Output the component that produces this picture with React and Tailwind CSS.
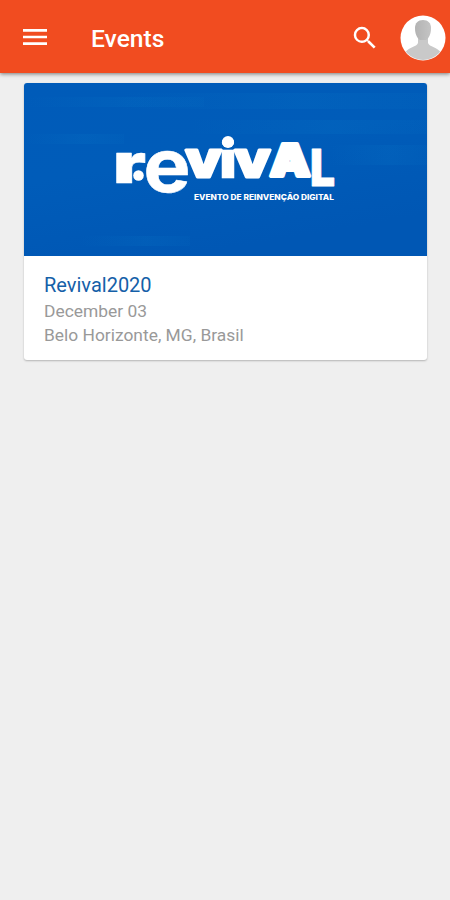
import { MdMenu, MdSearch } from "react-icons/md";

const EVENTS = [
	{
		id: 1,
		title: "Revival2020",
		date: "December 03",
		place: "Belo Horizonte, MG, Brasil",
	},
];

// Wordmark letters, each with its own size, baseline and weight
const LETTERS = [
	{ char: "r", x: 113, y: 183, size: 55, width: 33, weight: 900, stroke: 0.6 },
	{ char: "e", x: 143.5, y: 192, size: 75, width: 47, weight: 700, stroke: 0.6 },
	{ char: "v", x: 185.5, y: 177, size: 49, width: 36, weight: 800, stroke: 3 },
	{ char: "i", x: 219, y: 178, size: 52, width: 18, weight: 900, stroke: 0.4 },
	{ char: "v", x: 234.5, y: 177, size: 49, width: 36, weight: 800, stroke: 3 },
	{ char: "A", x: 270, y: 176, size: 44, width: 40, weight: 900, stroke: 4 },
	{ char: "L", x: 310, y: 186, size: 51, width: 25, weight: 900, stroke: 0.8 },
];

function Avatar() {
	return (
		<svg viewBox="0 0 46 46" className="h-[46px] w-[46px]">
			<defs>
				<clipPath id="avatar-clip">
					<circle cx="23" cy="23" r="22" />
				</clipPath>
				<linearGradient id="avatar-head">
					<stop offset="0" stopColor="#b3b3b3" />
					<stop offset="1" stopColor="#c4c4c4" />
				</linearGradient>
			</defs>
			<circle cx="23" cy="23" r="22.5" fill="#fff" />
			<g clipPath="url(#avatar-clip)">
				<path
					d="M5 46V38C8 32 17 32 18 28V20H28V28C29 32 38 32 41 38V46Z"
					fill="#c9c9c9"
				/>
				<path
					d="M15 13C15 8 18 5 23 5C28 5 31 8 31 13C31 19 29 23 26 25H20C17 23 15 19 15 13Z"
					fill="url(#avatar-head)"
				/>
			</g>
		</svg>
	);
}

function Header() {
	return (
		<header className="relative flex h-[73px] items-center bg-[#f14c20] text-white shadow-[0_1px_4px_rgba(0,0,0,0.5)]">
			<MdMenu className="ml-[19px] h-8 w-8" />
			<h1 className="ml-10 flex-1 pt-[5px] text-[24.6px] font-medium">
				Events
			</h1>
			<MdSearch className="mt-0.5 mr-5 h-[30px] w-[30px]" />
			<div className="mr-1 pt-0.5">
				<Avatar />
			</div>
		</header>
	);
}

function Banner() {
	return (
		<svg viewBox="24 83 403 173" className="block h-[173px] w-full">
			<defs>
				<linearGradient id="banner-bg" x1="0" y1="0" x2="0.4" y2="1">
					<stop offset="0" stopColor="#005bb9" />
					<stop offset="0.5" stopColor="#005cb9" />
					<stop offset="1" stopColor="#0057b4" />
				</linearGradient>
				<linearGradient id="streak">
					<stop offset="0" stopColor="#0878c8" stopOpacity="0" />
					<stop offset="0.6" stopColor="#0878c8" stopOpacity="0.18" />
					<stop offset="1" stopColor="#0878c8" stopOpacity="0.08" />
				</linearGradient>
			</defs>
			<rect x="24" y="83" width="403" height="173" fill="url(#banner-bg)" />
			<g fill="url(#streak)">
				<rect x="24" y="97" width="180" height="10" />
				<rect x="120" y="93" width="307" height="16" />
				<rect x="190" y="120" width="237" height="14" />
				<rect x="330" y="145" width="97" height="20" />
				<rect x="24" y="134" width="100" height="10" />
				<rect x="80" y="236" width="110" height="10" />
			</g>
			<g
				fill="#fff"
				stroke="#fff"
				strokeLinejoin="round"
				className="font-['Inter',sans-serif]">
				{LETTERS.map((l, i) => (
					<text
						key={i}
						x={l.x}
						y={l.y}
						fontSize={l.size}
						fontWeight={l.weight}
						strokeWidth={l.stroke}
						textLength={l.width}
						lengthAdjust="spacingAndGlyphs">
						{l.char}
					</text>
				))}
			</g>
			<circle cx="138.5" cy="175.5" r="5.3" fill="#fff" />
			<circle cx="228" cy="142" r="6" fill="#fff" />
			<text
				x="194"
				y="200"
				fill="#fff"
				fontSize="7.5"
				textLength="140"
				lengthAdjust="spacingAndGlyphs"
				className="font-['Inter',sans-serif] font-extrabold">
				EVENTO DE REINVENÇÃO DIGITAL
			</text>
		</svg>
	);
}

function EventCard({ event }) {
	return (
		<article className="overflow-hidden rounded-[3px] bg-white shadow-[0_1px_2px_rgba(0,0,0,0.25)]">
			<Banner />
			<div className="h-[104px] px-5 pt-4">
				<h2 className="text-[20px] leading-[27px] text-[#1560a8]">
					{event.title}
				</h2>
				<p className="text-[17.4px] leading-6 text-[#999]">{event.date}</p>
				<p className="text-[17.4px] leading-6 text-[#999]">{event.place}</p>
			</div>
		</article>
	);
}

export default function App() {
	return (
		<div className="h-[900px] w-[450px] overflow-hidden bg-[#efefef] font-['Roboto',sans-serif]">
			<Header />
			<main className="pt-2.5 pr-[23px] pl-6">
				{EVENTS.map((event) => (
					<EventCard key={event.id} event={event} />
				))}
			</main>
		</div>
	);
}
